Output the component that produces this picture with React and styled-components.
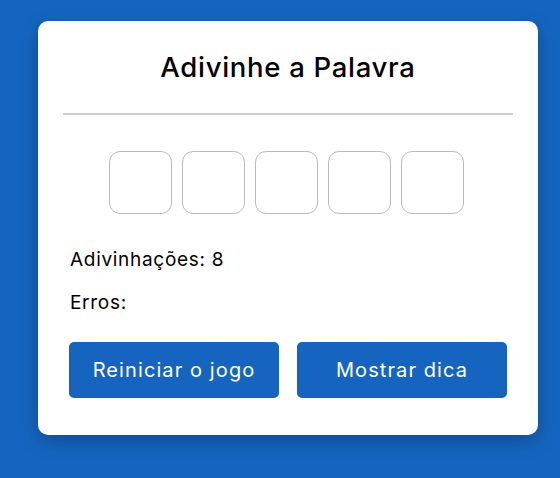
import React from 'react';
import styled, { createGlobalStyle } from 'styled-components';

const GlobalStyle = createGlobalStyle`
  body {
    margin: 0;
    background-color: #1565c0;
    font-family: Inter, "Open Sans", sans-serif;
  }
`

const Page = styled.div`
  min-height: 478px;
  padding: 21px 0 0 38px;
  box-sizing: border-box;
`

const Card = styled.div`
  width: 500px;
  box-sizing: border-box;
  background-color: white;
  border-radius: 10px;
  padding: 25px 25px 37px;
  box-shadow: 0 6px 18px rgba(0, 0, 0, 0.25);
  display: flex;
  flex-direction: column;
`

const Title = styled.h1`
  margin: 0;
  font-size: 27.5px;
  font-weight: 500;
  letter-spacing: 0.7px;
  line-height: 42px;
  text-align: center;
  color: #000;
`

const Divider = styled.div`
  height: 2px;
  margin-top: 25px;
  background-color: #cccccc;
`

const LetterRow = styled.div`
  display: flex;
  justify-content: center;
  gap: 10px;
  margin-top: 36px;
  padding-right: 3px;
`

const LetterBox = styled.div`
  width: 63px;
  height: 63px;
  box-sizing: border-box;
  border: 1px solid #bbbbbb;
  border-radius: 11px;
`

const Info = styled.p`
  margin: ${({first}) => first ? '32px' : '16px'} 0 0 7px;
  font-size: 19px;
  letter-spacing: 0.7px;
  line-height: 27px;
  color: #000;
`

const ButtonRow = styled.div`
  display: flex;
  justify-content: center;
  gap: 18px;
  margin-top: 26px;
`

const Button = styled.button`
  width: 210px;
  height: 56px;
  border: none;
  border-radius: 5px;
  background-color: #1565c0;
  color: white;
  font-family: inherit;
  font-size: 20px;
  letter-spacing: 1.1px;
`

const App = () => {
  const letters = [0, 1, 2, 3, 4];

  return (
    <Page>
      <GlobalStyle />
      <Card>
        <Title>Adivinhe a Palavra</Title>
        <Divider />
        <LetterRow>
          {letters.map(i => <LetterBox key={i} />)}
        </LetterRow>
        <Info first>Adivinhações: 8</Info>
        <Info>Erros:</Info>
        <ButtonRow>
          <Button>Reiniciar o jogo</Button>
          <Button>Mostrar dica</Button>
        </ButtonRow>
      </Card>
    </Page>
  );
};

export default App;
